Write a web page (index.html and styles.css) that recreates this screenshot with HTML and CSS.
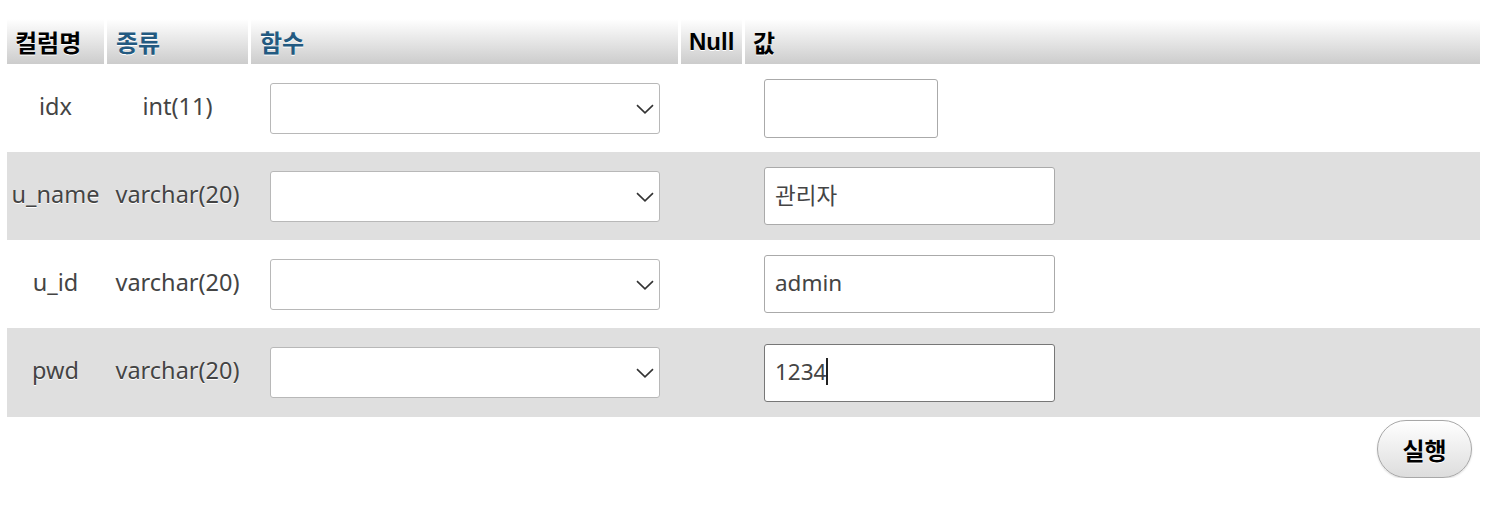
FILE: index.html
```html
<!DOCTYPE html>
<html lang="ko">
<head>
<meta charset="utf-8">
<title>Insert</title>
<link rel="stylesheet" href="styles.css">
</head>
<body>
<div class="page">
  <div class="tbl">
    <div class="row head">
      <div class="th">컬럼명</div>
      <div class="th link">종류</div>
      <div class="th link">함수</div>
      <div class="th">Null</div>
      <div class="th">값</div>
    </div>
    <div class="row">
      <div class="td c">idx</div>
      <div class="td c">int(11)</div>
      <div class="td"><div class="sel"><select></select><svg class="chev" width="18" height="10" viewBox="0 0 18 10"><path d="M1 1.2 L9 8.8 L17 1.2" fill="none" stroke="#333" stroke-width="1.6"/></svg></div></div>
      <div class="td"></div>
      <div class="td"><input class="inp short" type="text" value=""></div>
    </div>
    <div class="row alt">
      <div class="td c">u_name</div>
      <div class="td c">varchar(20)</div>
      <div class="td"><div class="sel"><select></select><svg class="chev" width="18" height="10" viewBox="0 0 18 10"><path d="M1 1.2 L9 8.8 L17 1.2" fill="none" stroke="#333" stroke-width="1.6"/></svg></div></div>
      <div class="td"></div>
      <div class="td"><input class="inp" type="text" value="관리자"></div>
    </div>
    <div class="row">
      <div class="td c">u_id</div>
      <div class="td c">varchar(20)</div>
      <div class="td"><div class="sel"><select></select><svg class="chev" width="18" height="10" viewBox="0 0 18 10"><path d="M1 1.2 L9 8.8 L17 1.2" fill="none" stroke="#333" stroke-width="1.6"/></svg></div></div>
      <div class="td"></div>
      <div class="td"><input class="inp" type="text" value="admin"></div>
    </div>
    <div class="row alt last">
      <div class="td c">pwd</div>
      <div class="td c">varchar(20)</div>
      <div class="td"><div class="sel"><select></select><svg class="chev" width="18" height="10" viewBox="0 0 18 10"><path d="M1 1.2 L9 8.8 L17 1.2" fill="none" stroke="#333" stroke-width="1.6"/></svg></div></div>
      <div class="td"></div>
      <div class="td"><div class="inp focus" role="textbox"><span>1234</span><span class="caret"></span></div></div>
    </div>
  </div>
  <div class="actions">
    <button class="btn" type="button">실행</button>
  </div>
</div>
</body>
</html>
```
FILE: styles.css
```css
* { box-sizing: border-box; }
html, body { margin: 0; padding: 0; background: #fff; }
body {
  font-family: "Noto Sans", "Noto Sans CJK KR", sans-serif;
  color: #444;
}
.page {
  width: 1473px;
  margin-left: 7px;
  padding-top: 19px;
}
.row {
  display: grid;
  grid-template-columns: 97px 144px 430px 64px 738px;
  height: 88px;
  align-items: center;
}
.row.last { height: 89px; }
.row.alt { background: #dfdfdf; }
.row.head {
  height: 45px;
  align-items: stretch;
}
.th {
  font-family: "Liberation Sans", "Noto Sans CJK KR", sans-serif;
  font-weight: bold;
  font-size: 24px;
  color: #000;
  text-shadow: 0 1px 0 #fff;
  background: linear-gradient(#ffffff, #cccccc);
  padding-left: 8px;
  display: flex;
  align-items: center;
  border-left: 3px solid #fff;
}
.th:first-child { border-left: 0; }
.th.link { color: #235a81; padding-left: 9px; }
.td {
  font-size: 23.5px;
  color: #444;
  text-shadow: 0 1px 0 #fff;
  padding-left: 3px;
}
.td.c { text-align: center; padding-bottom: 5px; }
.td:first-child { padding-left: 0; }
.sel {
  position: relative;
  width: 390px;
  height: 51px;
  margin-left: 19px;
}
.sel select {
  -webkit-appearance: none;
  appearance: none;
  width: 100%;
  height: 100%;
  border: 1px solid #b8b8b8;
  border-radius: 3px;
  background: #fff;
  margin: 0;
}
.chev {
  position: absolute;
  right: 6px;
  top: 21px;
}
.inp {
  display: flex;
  align-items: center;
  width: 291px;
  height: 58px;
  margin: 0 0 0 19px;
  padding: 0 10px 3px;
  border: 1px solid #aaa;
  border-radius: 3px;
  background: #fff;
  font-family: "Noto Sans", "Noto Sans CJK KR", sans-serif;
  font-size: 22.5px;
  color: #444;
  outline: none;
}
.inp.short { width: 174px; height: 59px; }
.inp.focus { border-color: #777; }
.caret {
  display: inline-block;
  width: 2px;
  height: 27px;
  background: #222;
  margin-left: 0;
}
.actions {
  display: flex;
  justify-content: flex-end;
  padding: 3px 8px 0 0;
}
.btn {
  width: 95px;
  height: 58px;
  border: 1px solid #a8a8a8;
  border-radius: 29px;
  background: linear-gradient(#ffffff, #dddddd);
  font-family: "Liberation Sans", "Noto Sans CJK KR", sans-serif;
  font-weight: bold;
  font-size: 24px;
  color: #000;
  text-shadow: 0 1px 0 #fff;
  box-shadow: 0 1px 2px rgba(0,0,0,0.15);
  padding: 0;
}
```
